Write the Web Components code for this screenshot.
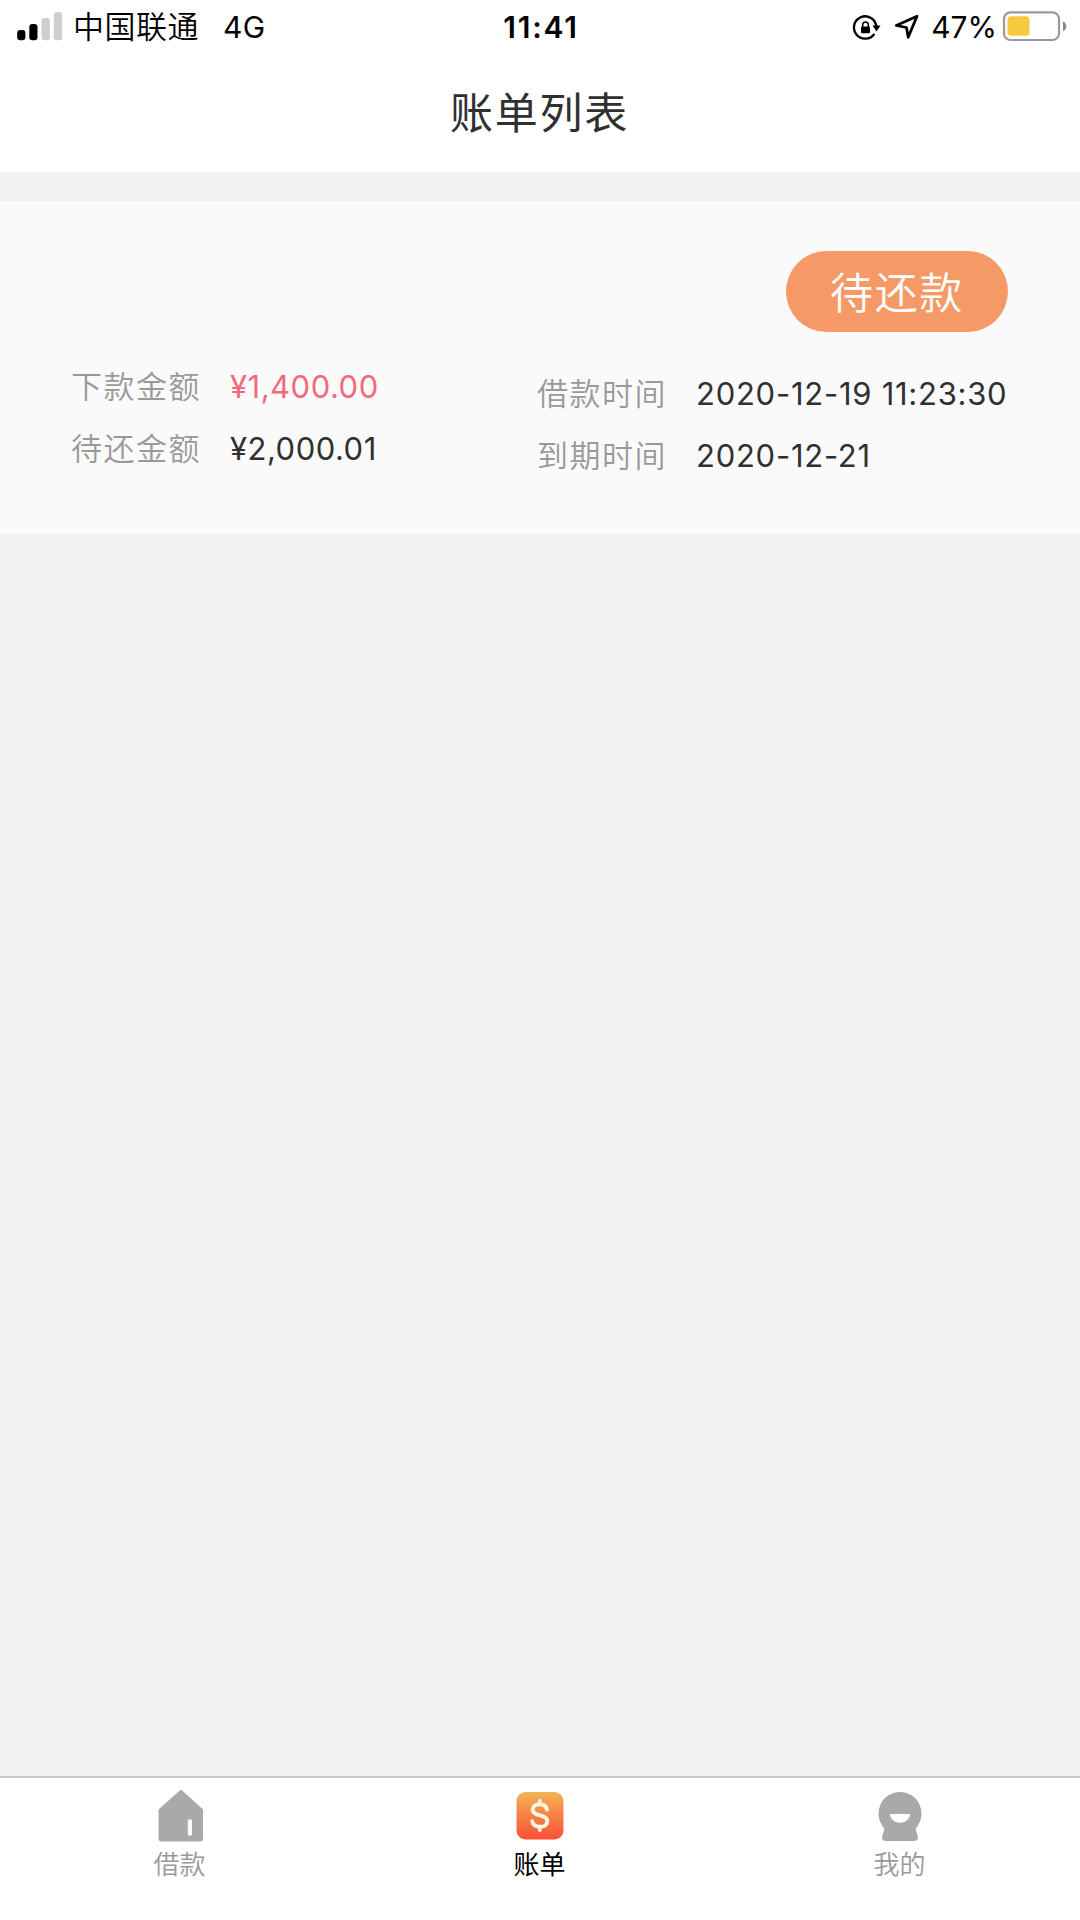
<!DOCTYPE html>
<html lang="zh-CN">
<head>
<meta charset="UTF-8">
<meta name="viewport" content="width=device-width, initial-scale=1">
<title>账单列表</title>
<style>
    html, body {
        margin: 0;
        height: 100%;
    }

    body {
        background: #f1f1f1;
        font-family: Inter, "Noto Sans CJK SC", sans-serif;
    }
</style>
</head>
<body>
<bill-app></bill-app>

<script>
// Crea el shadow root de un componente a partir de su HTML
function render(element, html) {
    const template = document.createElement("template");
    template.innerHTML = html;
    element.attachShadow({ mode: "open" });
    element.shadowRoot.appendChild(template.content.cloneNode(true));
}

// Barra de estado del teléfono
class StatusBar extends HTMLElement {
    constructor() {
        super();
        render(this, `
<style>
    :host {
        display: grid;
        grid-template-columns: 1fr auto 1fr;
        grid-template-rows: 54px;
        align-items: center;
        height: 54px;
        padding: 0 12px 0 17px;
        box-sizing: border-box;
        color: #000;
        font-size: 30px;
        line-height: 54px;
    }
    .left, .right { display: flex; align-items: center; height: 54px; }
    .right { justify-content: flex-end; }
    .carrier { margin-left: 10px; line-height: 56px; font-size: 31px; font-weight: 350; letter-spacing: .5px; }
    .network { margin-left: 24px; letter-spacing: .3px; }
    .time { margin-right: 3px; font-weight: 600; letter-spacing: 1.8px; }
    .percent { margin: 0 6px 0 12px; letter-spacing: 0; }
    svg { display: block; flex: none; }
    .arrow { margin-left: 13px; }
</style>

<div class="left">
    <svg width="46" height="54" viewBox="0 0 46 54">
        <rect x=".2" y="30" width="8.2" height="10.3" rx="3"/>
        <rect x="12.3" y="24" width="8.2" height="16.3" rx="3"/>
        <rect x="24.5" y="18" width="8.4" height="22.3" rx="3" fill="#cfcfcf"/>
        <rect x="36.7" y="12" width="8.4" height="28.3" rx="3" fill="#cfcfcf"/>
    </svg>
    <span class="carrier">中国联通</span>
    <span class="network">4G</span>
</div>
<span class="time">11:41</span>
<div class="right">
    <svg width="29" height="54" viewBox="0 0 29 54">
        <path d="M22.4 33.8A11.2 11.2 0 1 1 24.3 26.5" fill="none" stroke="#000" stroke-width="2.3"/>
        <path d="M20.5 25.5h8L24.5 31.5z"/>
        <rect x="9" y="26.5" width="9" height="6.8" rx="1"/>
        <path d="M10.7 27v-2.2a2.8 2.8 0 0 1 5.6 0V27" fill="none" stroke="#000" stroke-width="1.5"/>
    </svg>
    <svg class="arrow" width="25" height="54" viewBox="0 0 25 54">
        <path d="M23 16.3 2.3 25.5l10.2 2 1.7 9.8z" fill="none" stroke="#000" stroke-width="2.8" stroke-linejoin="round"/>
    </svg>
    <span class="percent">47%</span>
    <svg width="65" height="54" viewBox="0 0 65 54">
        <rect x="1" y="12.3" width="55" height="27.7" rx="6.5" fill="#fff" stroke="#999" stroke-width="2.2"/>
        <rect x="4.5" y="16.2" width="22" height="19.6" rx="3.5" fill="#f6ca3e"/>
        <path d="M60 21.3c4.4 2 4.4 8 0 10z" fill="#888"/>
    </svg>
</div>
`);
    }
}

// Etiqueta y valor de una factura
class BillField extends HTMLElement {
    constructor() {
        super();
        render(this, `
<style>
    :host {
        display: flex;
        height: 62px;
        line-height: 61px;
        font-size: 31px;
        color: #303030;
        white-space: nowrap;
    }
    .label {
        width: 159px;
        margin-left: -1px;
        color: #999;
        font-weight: 350;
        letter-spacing: 1.5px;
    }
    .value { letter-spacing: var(--value-spacing, .5px); }
    :host([highlight]) .value { color: #f0697c; }
</style>

<span class="label"><slot name="label"></slot></span>
<span class="value"><slot></slot></span>
`);
    }
}

// Tarjeta de una factura: estado arriba, dos columnas de datos abajo
class BillCard extends HTMLElement {
    constructor() {
        super();
        render(this, `
<style>
    :host {
        display: flex;
        flex-direction: column;
        height: 333px;
        padding: 50px 72px 0;
        box-sizing: border-box;
        background: #fafafa;
    }
    .status {
        align-self: flex-end;
        width: 222px;
        height: 81px;
        border-radius: 41px;
        background: #f59a67;
        color: #fff;
        font-size: 43px;
        font-weight: 350;
        letter-spacing: 1.6px;
        line-height: 84px;
        text-align: center;
    }
    .columns {
        display: grid;
        grid-template-columns: 466px 1fr;
        margin-top: 24px;
    }
    .right { --value-spacing: .74px; padding-top: 7px; }
</style>

<div class="status"><slot name="status"></slot></div>
<div class="columns">
    <div><slot name="amounts"></slot></div>
    <div class="right"><slot name="dates"></slot></div>
</div>
`);
    }
}

// Pestaña de la barra inferior
class TabItem extends HTMLElement {
    constructor() {
        super();
        render(this, `
<style>
    :host {
        display: flex;
        flex: 1;
        flex-direction: column;
        align-items: center;
        color: #999;
        font-size: 26px;
        font-weight: 350;
        line-height: 41px;
    }
    :host([active]) { color: #000; font-weight: 400; }
    ::slotted(svg) { display: block; margin-top: 8px; }
    .text { margin-right: 1px; }
</style>

<slot name="icon"></slot>
<span class="text"><slot></slot></span>
`);
    }
}

class TabBar extends HTMLElement {
    constructor() {
        super();
        render(this, `
<style>
    :host {
        display: flex;
        height: 144px;
        box-sizing: border-box;
        border-top: 2px solid #c9c9c9;
        background: #fff;
    }
</style>

<slot></slot>
`);
    }
}

// Pantalla completa
class BillApp extends HTMLElement {
    constructor() {
        super();
        render(this, `
<style>
    :host {
        display: flex;
        flex-direction: column;
        height: 1920px;
        background: #f1f1f1;
    }
    header { height: 172px; background: #fff; }
    h1 {
        margin: 0;
        padding: 19px 1px 0 0;
        color: #303030;
        font-size: 43px;
        font-weight: 400;
        letter-spacing: 1.7px;
        line-height: 80px;
        text-align: center;
    }
    main { flex: 1; padding-top: 29px; }
</style>

<header>
    <status-bar></status-bar>
    <h1>账单列表</h1>
</header>
<main>
    <bill-card>
        <span slot="status">待还款</span>
        <bill-field slot="amounts" highlight><span slot="label">下款金额</span>¥1,400.00</bill-field>
        <bill-field slot="amounts"><span slot="label">待还金额</span>¥2,000.01</bill-field>
        <bill-field slot="dates"><span slot="label">借款时间</span>2020-12-19 11:23:30</bill-field>
        <bill-field slot="dates"><span slot="label">到期时间</span>2020-12-21</bill-field>
    </bill-card>
</main>
<tab-bar>
    <tab-item>
        <svg slot="icon" width="48" height="58" viewBox="0 0 48 58">
            <path d="M23.5 4.8q1.500-1.500 3 0L47 23.500v29q0 3-3 3H5.500q-3 0-3-3v-29z" fill="#a9a9a9"/>
            <rect x="31.8" y="33.500" width="4.200" height="16" rx="1" fill="#fff"/>
        </svg>
        借款
    </tab-item>
    <tab-item active>
        <svg slot="icon" width="48" height="58" viewBox="0 0 48 58">
            <defs>
                <linearGradient id="coin" x1="0" y1="0" x2="0" y2="1">
                    <stop offset="0" stop-color="#f2b354"/>
                    <stop offset="1" stop-color="#fa5035"/>
                </linearGradient>
            </defs>
            <rect x=".5" y="6" width="47" height="47.500" rx="9" fill="url(#coin)"/>
            <path d="M31 23.500c-1-4-4-5.300-7.300-5.300-4 0-7 2-7 5.300 0 7.800 14.600 4.200 14.600 11.700 0 3.600-3.200 5.600-7.200 5.600-4.300 0-7.200-2-7.900-5.600M23.800 15v3M23.800 41v3" fill="none" stroke="#fff6e4" stroke-width="3.900" stroke-linecap="round"/>
        </svg>
        账单
    </tab-item>
    <tab-item>
        <svg slot="icon" width="48" height="58" viewBox="0 0 48 58">
            <path d="M24 6a21.500 21.500 0 0 1 16.500 35.300Q39 43 40.500 46l1.300 4.500Q42.600 55 38.500 55h-29Q5.400 55 6.200 50.500L7.500 46Q9 43 7.500 41.300A21.500 21.500 0 0 1 24 6z" fill="#a9a9a9"/>
            <path d="M15 28h18q1.500 0 1 1.500a10.200 9 0 0 1-20 0q-.5-1.500 1-1.500z" fill="#fff"/>
        </svg>
        我的
    </tab-item>
</tab-bar>
`);
    }
}

// Registrar los componentes
customElements.define("status-bar", StatusBar);
customElements.define("bill-field", BillField);
customElements.define("bill-card", BillCard);
customElements.define("tab-item", TabItem);
customElements.define("tab-bar", TabBar);
customElements.define("bill-app", BillApp);
</script>
</body>
</html>
